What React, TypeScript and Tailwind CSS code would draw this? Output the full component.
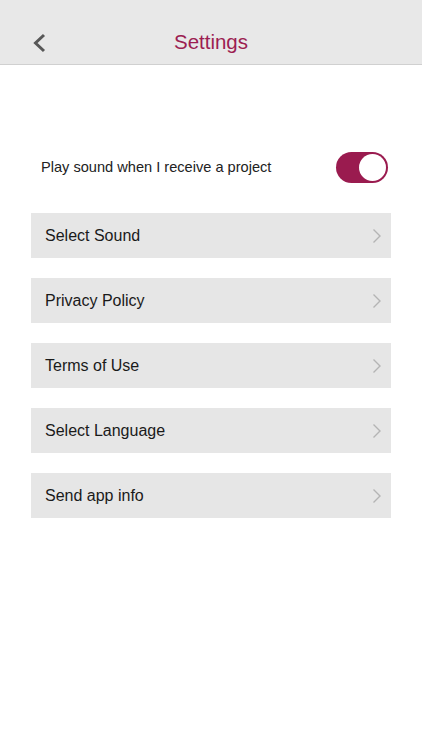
const items = ["Select Sound", "Privacy Policy", "Terms of Use", "Select Language", "Send app info"];

function Chevron() {
  return (
    <svg width="10" height="16" viewBox="0 0 10 16" fill="none">
      <path d="M1.5 1.5 L8 8 L1.5 14.5" stroke="#b4b4b4" strokeWidth="1.4" />
    </svg>
  );
}

export default function App() {
  return (
    <div className="min-h-[750px] w-[422px] bg-white font-['Liberation_Sans',sans-serif]">
      {/* header */}
      <header className="relative flex h-[65px] items-end justify-center border-b border-[#d0d0d0] bg-[#e8e8e8] pb-[12px]">
        <button className="absolute left-[32px] top-[33px]">
          <svg width="15" height="20" viewBox="0 0 15 20" fill="none">
            <path d="M12 2 L3.5 10 L12 18" stroke="#575757" strokeWidth="3" />
          </svg>
        </button>
        <h1 className="text-[20.5px] leading-none text-[#9c1e52]">Settings</h1>
      </header>

      <div className="flex flex-col px-[31px] pt-[87px]">
        <div className="flex items-center justify-between pl-[10px] pr-[3px]">
          <span className="text-[14.6px] text-[#222]">Play sound when I receive a project</span>
          <div className="flex h-[31px] w-[52px] items-center justify-end rounded-full bg-[#9a1b4f] p-[2px]">
            <div className="h-[27px] w-[27px] rounded-full bg-white" />
          </div>
        </div>

        <div className="mt-[30px] flex flex-col gap-[20px]">
          {items.map((label) => (
            <div
              key={label}
              className="flex h-[45px] items-center justify-between bg-[#e6e6e6] pl-[14px] pr-[9px]"
            >
              <span className="text-[16px] text-[#1a1a1a]">{label}</span>
              <Chevron />
            </div>
          ))}
        </div>
      </div>
    </div>
  );
}
